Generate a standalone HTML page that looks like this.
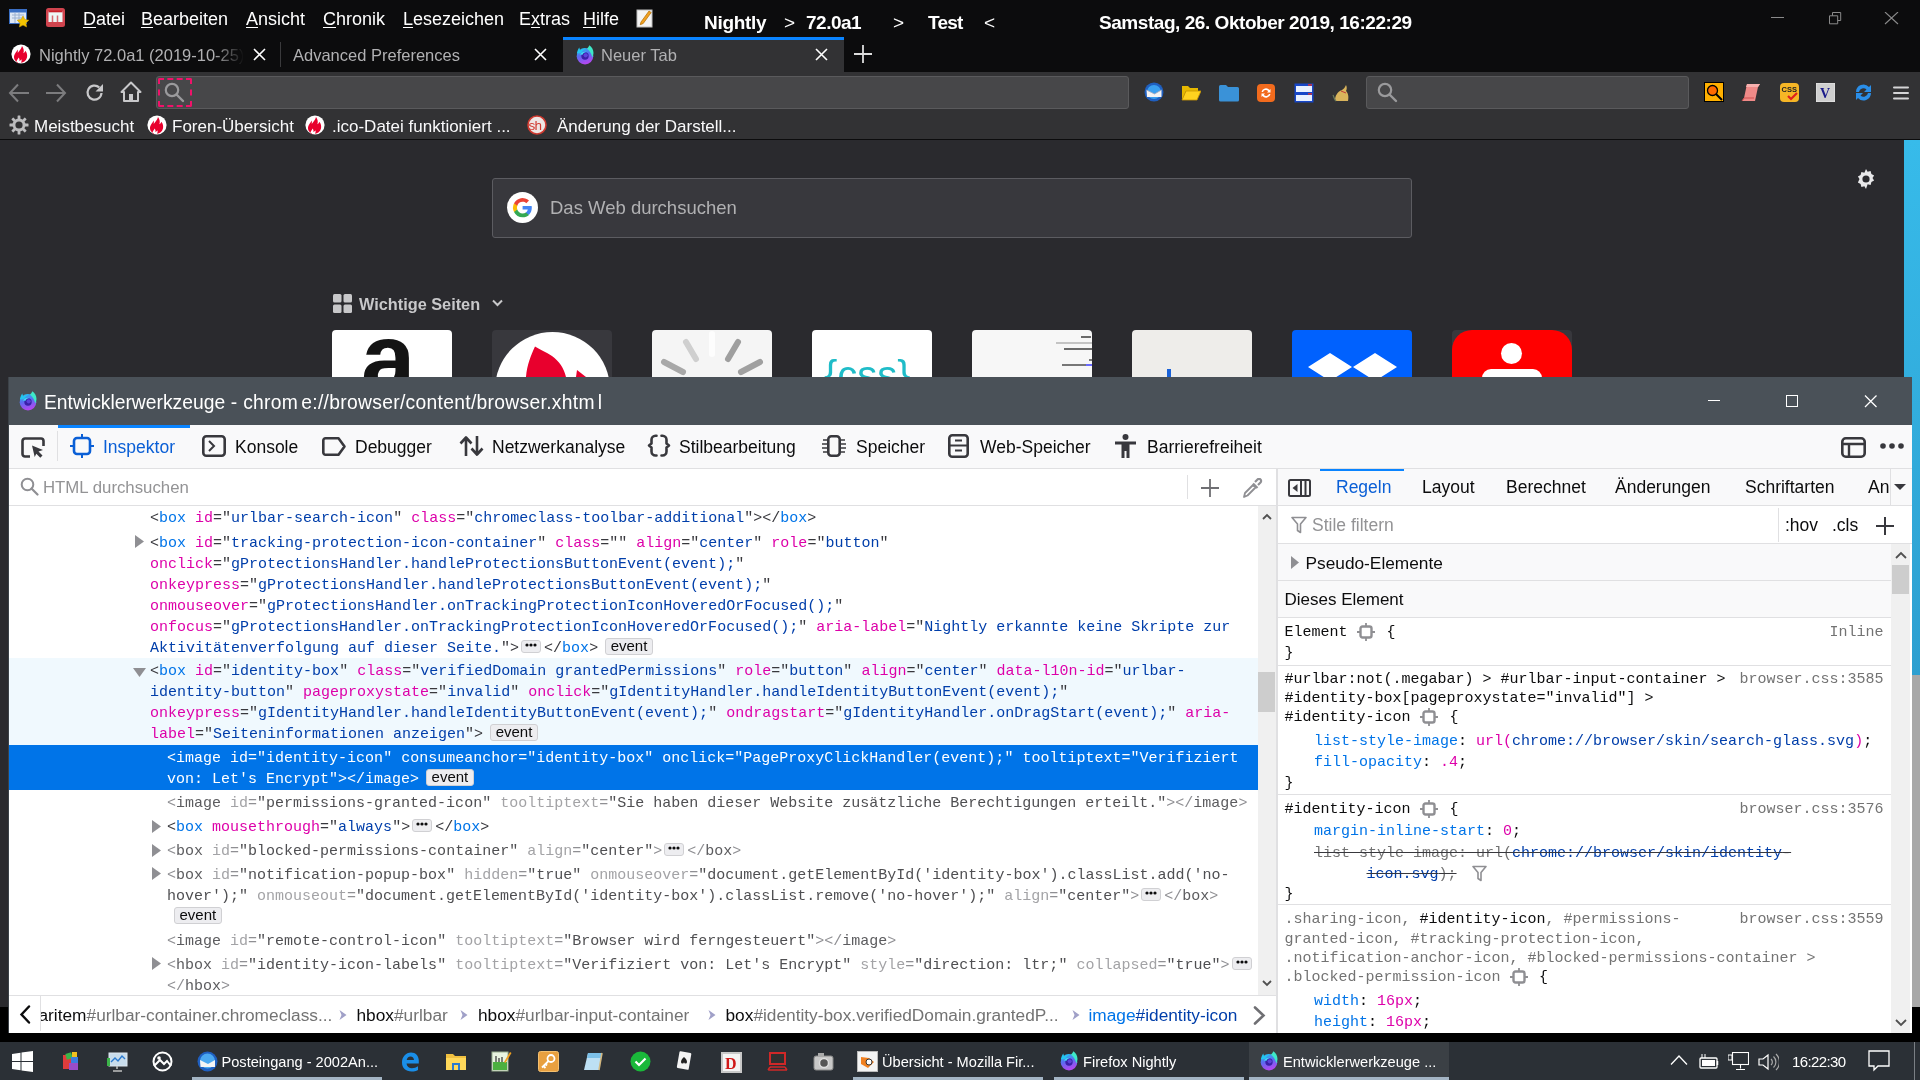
<!DOCTYPE html>
<html><head><meta charset="utf-8">
<style>
*{margin:0;padding:0;box-sizing:border-box}
html,body{width:1920px;height:1080px;overflow:hidden;background:#000;font-family:"Liberation Sans",sans-serif;position:relative}
.a{position:absolute}
.ws{white-space:pre}
/* top chrome */
#menubar{left:0;top:0;width:1920px;height:37px;background:#0c0c0d;color:#fff;font-size:18px}
#menubar .m{position:absolute;top:9px;white-space:pre}
#menubar .m u{text-decoration:underline;text-decoration-thickness:1px;text-underline-offset:2px}
#tabbar{left:0;top:37px;width:1920px;height:35px;background:#0c0c0d}
#nav{left:0;top:72px;width:1920px;height:68px;background:#323234}
#content{left:0;top:140px;width:1920px;height:867px;background:#2a2a2e}
#taskbar{left:0;top:1042px;width:1920px;height:38px;background:#2b3036}
/* devtools */
#dt{left:8px;top:377px;width:1904px;height:656px;background:#fff}
#dttitle{left:0;top:0;width:1904px;height:48px;background:#4a5158}

.ml{position:absolute;white-space:pre;font-family:"Liberation Mono",monospace;font-size:15px;line-height:21px;height:21px}
.ml .p,.ml .q{color:#38383d}.ml .t{color:#0074e8}.ml .n{color:#dd00a9}.ml .v{color:#003eaa}
.ml.sel span{color:#fff}
.ml.nd .p{color:#8f8f93}.ml.nd .t{color:#5c5c5f}.ml.nd .n{color:#a3a3a6}.ml.nd .v,.ml.nd .q{color:#4f4f52}
.tri{fill:#8f8f93}
.rl{position:absolute;white-space:pre;font-family:"Liberation Mono",monospace;font-size:15px;line-height:21px;height:21px;color:#0c0c0d}
.rl .s{color:#0c0c0d}.rl .u{color:#737373}.rl .p{color:#0c0c0d}.rl .pn{color:#0074e8}.rl .fn{color:#dd00a9}.rl .pv{color:#003eaa}.rl .og{color:#737373}
.rl .ov{text-decoration:line-through;text-decoration-color:#38383d}
.rl.src{color:#737373;text-align:right}

.ev{display:inline-block;position:relative;top:0;font-family:"Liberation Sans",sans-serif;font-size:15px;line-height:12px;height:17px;padding:0 4.5px;border:1px solid #d0d0d3;border-radius:3px;background:#ededf0;color:#0c0c0d!important;margin-left:7px;vertical-align:top;margin-top:0;box-sizing:border-box;padding-top:1px}
.dots{display:inline-block;width:20px;height:13px;border:1px solid #d0d0d3;border-radius:3px;background:#ededf0;margin:2px 3px 0 2px;vertical-align:top;text-align:center;line-height:9px;box-sizing:border-box}
.dots svg{fill:#0c0c0d;vertical-align:middle}

</style></head><body><div id="root" style="position:absolute;left:0;top:0;width:1920px;height:1080px;overflow:hidden;will-change:transform">
<div id="menubar" class="a">
  <svg class="a" style="left:9px;top:8px" width="21" height="20" viewBox="0 0 21 20"><rect x="0.5" y="1.5" width="17" height="14" fill="#dfe8f5" stroke="#3a6fc4"/><rect x="0.5" y="1.5" width="17" height="3" fill="#3a6fc4"/><path d="M3 7h12M3 10h12M6 5v10M10 5v10" stroke="#9bb0d0" stroke-width="1"/><path d="M14 8l1.8 3.6 4 .6-2.9 2.8.7 4-3.6-1.9-3.6 1.9.7-4-2.9-2.8 4-.6z" fill="#f5c400" stroke="#c99a00" stroke-width=".6"/></svg>
  <svg class="a" style="left:46px;top:8px" width="19" height="19" viewBox="0 0 19 19"><rect x="0" y="0" width="19" height="19" rx="2.5" fill="#d0444e"/><rect x="2.5" y="3" width="14" height="11" fill="#eef6f6"/><rect x="2.5" y="2.5" width="14" height="1.8" fill="#c81e28"/><path d="M6.5 7.5v6.5M11.5 7.5v6.5" stroke="#d86a72" stroke-width="1.5"/></svg>
  <div class="m" style="left:83px"><u>D</u>atei</div>
  <div class="m" style="left:141px"><u>B</u>earbeiten</div>
  <div class="m" style="left:246px"><u>A</u>nsicht</div>
  <div class="m" style="left:323px"><u>C</u>hronik</div>
  <div class="m" style="left:403px"><u>L</u>esezeichen</div>
  <div class="m" style="left:519px">E<u>x</u>tras</div>
  <div class="m" style="left:583px"><u>H</u>ilfe</div>
  <svg class="a" style="left:636px;top:8px" width="18" height="20" viewBox="0 0 18 20"><rect x="1" y="2" width="15" height="17" fill="#f4f4f4" stroke="#bdbdbd"/><path d="M5 14l8-11 2.2 1.5-8 11-3 1.2z" fill="#f0a020" stroke="#b06c00" stroke-width=".7"/></svg>
  <div class="m b" style="left:704px;top:12px;font-weight:bold;font-size:19px;letter-spacing:-0.3px">Nightly</div>
  <div class="m b" style="left:784px;top:12px;font-weight:normal;font-size:19px">&gt;</div>
  <div class="m b" style="left:806px;top:12px;font-weight:bold;font-size:19px;letter-spacing:-0.5px">72.0a1</div>
  <div class="m b" style="left:893px;top:12px;font-weight:normal;font-size:19px">&gt;</div>
  <div class="m b" style="left:928px;top:12px;font-weight:bold;font-size:19px;letter-spacing:-0.8px">Test</div>
  <div class="m b" style="left:984px;top:12px;font-weight:normal;font-size:19px">&lt;</div>
  <div class="m b" style="left:1099px;top:12px;font-weight:bold;font-size:19px;letter-spacing:-0.45px">Samstag, 26. Oktober 2019, 16:22:29</div>
  <svg class="a" style="left:1771px;top:12px" width="130" height="14" viewBox="0 0 130 14"><path d="M0 5.5h13" stroke="#8a8a8a" stroke-width="1"/><path d="M58.5 3.8h8.2v8h-8.2z M61.5 3.8V0.5h8.2v8h-3" fill="none" stroke="#8a8a8a" stroke-width="1"/><path d="M114 0l13 12M127 0l-13 12" stroke="#8a8a8a" stroke-width="1.1"/></svg>
</div>
<div id="tabbar" class="a">
  <svg class="a" style="left:11px;top:7px" width="20" height="20" viewBox="0 0 20 20"><circle cx="10" cy="10" r="9.6" fill="#fff"/><path d="M7 18.5c-3-1.2-4.6-4-3.8-7 .6-2.3 2.4-3.6 3.3-6 .5 1.5.4 2.6.2 3.6 1.4-2.5 3.8-4 4.3-7.2 1.6 2.2 2.3 4.5 1.4 7.3 1-.4 1.6-1.3 1.9-2.4 1.7 2 2.3 4.5 1.6 7-.8 2.8-3.1 4.6-6 4.9.8-1 1-2.3.3-3.4-.3 1-1 1.4-1.8 1.6.3-1.3 0-2.4-.9-3.3-.2 1.2-1 1.8-1.5 2.7-.6 1.1-.3 2.2 1 3.2z" fill="#e8002d"/></svg>
  <div class="a ws" style="left:39px;top:9px;width:205px;overflow:hidden;font-size:16.5px;color:#b1b1b3;-webkit-mask-image:linear-gradient(90deg,#000 85%,transparent)">Nightly 72.0a1 (2019-10-25)</div>
  <svg class="a" style="left:253px;top:11px" width="13" height="13" viewBox="0 0 13 13"><path d="M1 1l11 11M12 1L1 12" stroke="#fff" stroke-width="1.6"/></svg>
  <div class="a" style="left:280px;top:5px;width:1px;height:25px;background:#3a3a3c"></div>
  <div class="a ws" style="left:293px;top:9px;font-size:16.5px;color:#b1b1b3">Advanced Preferences</div>
  <svg class="a" style="left:534px;top:11px" width="13" height="13" viewBox="0 0 13 13"><path d="M1 1l11 11M12 1L1 12" stroke="#fff" stroke-width="1.6"/></svg>
  <div class="a" style="left:563px;top:0;width:281px;height:35px;background:#323234;border-top:3px solid #0a84ff"></div>
  <svg class="a" style="left:575px;top:8px" width="20" height="20" viewBox="0 0 20 20"><defs><linearGradient id="ffg1" x1="0" y1="0" x2="0.3" y2="1"><stop offset="0" stop-color="#20c8f0"/><stop offset=".5" stop-color="#5a6cf0"/><stop offset="1" stop-color="#b048f0"/></linearGradient></defs><circle cx="10" cy="11.2" r="8.3" fill="url(#ffg1)"/><path d="M12 3.4c1.2-.9 2-2 2.3-3.1 2.6 1.6 4.2 4.6 4.2 7.8-.1 1.7-.5 3.2-1.3 4.5-.4-3.6-2.4-6.5-5.2-9.2z" fill="#3ee8c8"/><path d="M1.9 8.6c.3-2.6 1.2-4.6 2.4-6.1.2 1.3.6 2.2 1.3 3C7 4.2 8.6 3.6 10.5 3.6 8.5 4.8 7.1 6.3 6.3 8z" fill="#22c6f0"/><circle cx="10" cy="11" r="3.7" fill="#3b1fa8"/><circle cx="10.7" cy="10.3" r="2.1" fill="#5d42da"/><path d="M5 9.6c1.3-2.4 3.8-3.4 6.6-2.8-1.9.4-3.3 1.3-4.1 2.9z" fill="#3fe0f4"/></svg>
  <div class="a ws" style="left:601px;top:9px;font-size:16.5px;color:#b1b1b3">Neuer Tab</div>
  <svg class="a" style="left:815px;top:11px" width="13" height="13" viewBox="0 0 13 13"><path d="M1 1l11 11M12 1L1 12" stroke="#fff" stroke-width="1.6"/></svg>
  <svg class="a" style="left:854px;top:8px" width="18" height="18" viewBox="0 0 18 18"><path d="M9 0v18M0 9h18" stroke="#ddd" stroke-width="1.8"/></svg>
</div>
<div id="nav" class="a">
  <svg class="a" style="left:8px;top:11px" width="22" height="20" viewBox="0 0 22 20"><path d="M10 1.5L2 10l8 8.5M2.5 10H21" fill="none" stroke="#7c7c7e" stroke-width="2"/></svg>
  <svg class="a" style="left:45px;top:11px" width="22" height="20" viewBox="0 0 22 20"><path d="M12 1.5L20 10l-8 8.5M19.5 10H1" fill="none" stroke="#7c7c7e" stroke-width="2"/></svg>
  <svg class="a" style="left:84px;top:10px" width="21" height="21" viewBox="0 0 21 21"><path d="M17.5 11a7 7 0 1 1-2.3-5.6" fill="none" stroke="#c8c8ca" stroke-width="2.2"/><path d="M19 2v7.5h-7.5z" fill="#c8c8ca"/></svg>
  <svg class="a" style="left:120px;top:9px" width="22" height="22" viewBox="0 0 22 22"><path d="M11 1.5L1.5 11h2.5v9h14v-9h2.5z" fill="none" stroke="#c8c8ca" stroke-width="2" stroke-linejoin="round"/><rect x="9" y="13" width="4" height="7" fill="#c8c8ca"/></svg>
  <div class="a" style="left:156px;top:4px;width:973px;height:33px;background:#474749;border:1px solid #5a5a5c;border-radius:3px"></div>
  <div class="a" style="left:158px;top:6px;width:34px;height:29px;border:2.5px dashed #f0126a;border-radius:2px"></div>
  <svg class="a" style="left:164px;top:10px" width="21" height="21" viewBox="0 0 21 21"><circle cx="8" cy="8" r="6.2" fill="none" stroke="#9a9a9c" stroke-width="2.2"/><path d="M12.5 12.5l6.5 6.5" stroke="#9a9a9c" stroke-width="2.4" stroke-linecap="round"/></svg>
  <svg class="a" style="left:1144px;top:10px" width="20" height="20" viewBox="0 0 20 20"><circle cx="10" cy="10" r="9.5" fill="#1f5fc0"/><circle cx="10" cy="10" r="7" fill="#3aa0f0"/><path d="M2.5 8l8 4 7-4v7H3z" fill="#f4f4f4"/><path d="M2.5 8l8 4 7-4" fill="none" stroke="#aab" stroke-width=".8"/></svg>
  <svg class="a" style="left:1181px;top:13px" width="20" height="16" viewBox="0 0 20 16"><path d="M1 1h6l2 2h8v3H5L1 15z" fill="#e6b800"/><path d="M5 6h15l-4 9H1z" fill="#ffd21f" stroke="#c99600" stroke-width=".8"/></svg>
  <svg class="a" style="left:1219px;top:12px" width="20" height="18" viewBox="0 0 20 18"><path d="M0 2.5a1.5 1.5 0 0 1 1.5-1.5h5.5l2 2h9.5a1.5 1.5 0 0 1 1.5 1.5v11.5a1.5 1.5 0 0 1-1.5 1.5h-17A1.5 1.5 0 0 1 0 16z" fill="#3a92d8"/></svg>
  <svg class="a" style="left:1257px;top:12px" width="18" height="18" viewBox="0 0 18 18"><rect width="18" height="18" rx="4" fill="#f26b1d"/><path d="M4.5 8a4.5 4.5 0 0 1 8-2l1-1v3.5h-3.5l1.2-1.2A3 3 0 0 0 6 8zM13.5 10a4.5 4.5 0 0 1-8 2l-1 1V9.5h3.5L6.8 10.7A3 3 0 0 0 12 10z" fill="#fff"/></svg>
  <svg class="a" style="left:1294px;top:11px" width="20" height="20" viewBox="0 0 20 20"><rect x=".5" y=".5" width="19" height="19" fill="#1646c8"/><rect x="2" y="3" width="16" height="6" fill="#e8f0ff"/><rect x="2" y="12" width="16" height="6" fill="#e8f0ff"/><rect x="14" y="1.2" width="4" height="1.4" fill="#e03030"/><rect x="14" y="10.2" width="4" height="1.4" fill="#e03030"/></svg>
  <svg class="a" style="left:1331px;top:11px" width="20" height="20" viewBox="0 0 20 20"><path d="M4 18c0-5 2-9 7-11 2-1 3-3 4-5 1 2 1 4 0 6 2 2 3 5 2 10z" fill="#d9b45c"/><path d="M2 12c1 2 1 4 3 6" stroke="#6a7a5a" stroke-width="1.2" fill="none"/><path d="M10 8l5 2" stroke="#c03a3a" stroke-width="1"/></svg>
  <div class="a" style="left:1366px;top:4px;width:323px;height:33px;background:#474749;border:1px solid #5a5a5c;border-radius:3px"></div>
  <svg class="a" style="left:1377px;top:10px" width="21" height="21" viewBox="0 0 21 21"><circle cx="8" cy="8" r="6.2" fill="none" stroke="#9a9a9c" stroke-width="2.2"/><path d="M12.5 12.5l6.5 6.5" stroke="#9a9a9c" stroke-width="2.4" stroke-linecap="round"/></svg>
  <svg class="a" style="left:1704px;top:10px" width="20" height="20" viewBox="0 0 20 20"><rect x=".5" y=".5" width="19" height="19" fill="#ffb000" stroke="#000"/><circle cx="8.5" cy="8.5" r="5" fill="#ff6a00" stroke="#000" stroke-width="1.3"/><path d="M12 12l6 6" stroke="#000" stroke-width="2"/></svg>
  <svg class="a" style="left:1741px;top:11px" width="20" height="19" viewBox="0 0 20 19"><path d="M6 1h13l-2 3-3 14H1l2-3z" fill="#f08a88"/><path d="M6 1h13l-2 3H5z" fill="#f7b0ae"/><path d="M1 18l2-3h10" fill="none" stroke="#d05050" stroke-width="1"/></svg>
  <svg class="a" style="left:1780px;top:11px" width="19" height="19" viewBox="0 0 19 19"><rect width="19" height="19" rx="4" fill="#f6b626"/><text x="1.5" y="9" font-family="Liberation Sans" font-weight="bold" font-size="7.5" fill="#222">CSS</text><path d="M8 13l3 3 6-6" stroke="#e0201c" stroke-width="2.2" fill="none"/></svg>
  <svg class="a" style="left:1816px;top:11px" width="19" height="19" viewBox="0 0 19 19"><rect width="19" height="19" fill="#cfcfcf" stroke="#e8e8e8"/><text x="4" y="15" font-family="Liberation Serif" font-weight="bold" font-size="14" fill="#1a1a8a">V</text></svg>
  <svg class="a" style="left:1853px;top:10px" width="21" height="21" viewBox="0 0 21 21"><path d="M3 10a7.5 7.5 0 0 1 13-5l2-2v7h-7l2.5-2.5A4.5 4.5 0 0 0 6 10z" fill="#2a8ee8"/><path d="M18 11a7.5 7.5 0 0 1-13 5l-2 2v-7h7l-2.5 2.5A4.5 4.5 0 0 0 15 11z" fill="#2a8ee8"/></svg>
  <svg class="a" style="left:1893px;top:13px" width="16" height="16" viewBox="0 0 16 16"><path d="M1 2.5h14M1 8h14M1 13.5h14" stroke="#d4d4d6" stroke-width="2" stroke-linecap="round"/></svg>
  <svg class="a" style="left:9px;top:43px" width="20" height="20" viewBox="0 0 20 20"><g fill="#bdbdbf"><circle cx="10" cy="10" r="6.5"/><rect x="8.6" y="0.5" width="2.8" height="19" rx=".5"/><rect x="8.6" y="0.5" width="2.8" height="19" rx=".5" transform="rotate(45 10 10)"/><rect x="8.6" y="0.5" width="2.8" height="19" rx=".5" transform="rotate(90 10 10)"/><rect x="8.6" y="0.5" width="2.8" height="19" rx=".5" transform="rotate(135 10 10)"/></g><circle cx="10" cy="10" r="3.6" fill="#323234"/></svg>
  <div class="a ws" style="left:34px;top:45px;font-size:17px;color:#f9f9fa">Meistbesucht</div>
  <svg class="a" style="left:147px;top:43px" width="20" height="20" viewBox="0 0 20 20"><circle cx="10" cy="10" r="9.6" fill="#fff"/><path d="M7 18.5c-3-1.2-4.6-4-3.8-7 .6-2.3 2.4-3.6 3.3-6 .5 1.5.4 2.6.2 3.6 1.4-2.5 3.8-4 4.3-7.2 1.6 2.2 2.3 4.5 1.4 7.3 1-.4 1.6-1.3 1.9-2.4 1.7 2 2.3 4.5 1.6 7-.8 2.8-3.1 4.6-6 4.9.8-1 1-2.3.3-3.4-.3 1-1 1.4-1.8 1.6.3-1.3 0-2.4-.9-3.3-.2 1.2-1 1.8-1.5 2.7-.6 1.1-.3 2.2 1 3.2z" fill="#e8002d"/></svg>
  <div class="a ws" style="left:172px;top:45px;font-size:17px;color:#f9f9fa">Foren-Übersicht</div>
  <svg class="a" style="left:305px;top:43px" width="20" height="20" viewBox="0 0 20 20"><circle cx="10" cy="10" r="9.6" fill="#fff"/><path d="M7 18.5c-3-1.2-4.6-4-3.8-7 .6-2.3 2.4-3.6 3.3-6 .5 1.5.4 2.6.2 3.6 1.4-2.5 3.8-4 4.3-7.2 1.6 2.2 2.3 4.5 1.4 7.3 1-.4 1.6-1.3 1.9-2.4 1.7 2 2.3 4.5 1.6 7-.8 2.8-3.1 4.6-6 4.9.8-1 1-2.3.3-3.4-.3 1-1 1.4-1.8 1.6.3-1.3 0-2.4-.9-3.3-.2 1.2-1 1.8-1.5 2.7-.6 1.1-.3 2.2 1 3.2z" fill="#e8002d"/></svg>
  <div class="a ws" style="left:332px;top:45px;font-size:17px;color:#f9f9fa">.ico-Datei funktioniert ...</div>
  <svg class="a" style="left:527px;top:43px" width="20" height="20" viewBox="0 0 20 20"><circle cx="10" cy="10" r="9" fill="#efe6e4" stroke="#d03a30" stroke-width="1.6"/><text x="1.6" y="14.8" font-family="Liberation Sans" font-size="13.5" fill="#d03a30" letter-spacing="-0.8">sh</text></svg>
  <div class="a ws" style="left:557px;top:45px;font-size:17px;color:#f9f9fa">Änderung der Darstell...</div>
  <div class="a" style="left:0;top:67px;width:1920px;height:1px;background:#0c0c0d"></div>
</div>
<div id="content" class="a">
  <div class="a" style="left:492px;top:38px;width:920px;height:60px;background:#38383d;border:1px solid #5c5c61;border-radius:3px"></div>
  <svg class="a" style="left:507px;top:52px" width="31" height="31" viewBox="0 0 31 31"><circle cx="15.5" cy="15.5" r="15.5" fill="#fff"/><g transform="translate(6 6) scale(.8)"><path d="M23.5 12.3c0-.8-.1-1.6-.2-2.3H12v4.4h6.5a5.5 5.5 0 0 1-2.4 3.6v3h3.9c2.2-2.1 3.5-5.2 3.5-8.7z" fill="#4285f4"/><path d="M12 24c3.2 0 6-1.1 8-2.9l-3.9-3c-1.1.7-2.5 1.2-4.1 1.2-3.1 0-5.8-2.1-6.7-5H1.3v3.1A12 12 0 0 0 12 24z" fill="#34a853"/><path d="M5.3 14.3a7 7 0 0 1 0-4.6V6.6H1.3a12 12 0 0 0 0 10.8z" fill="#fbbc05"/><path d="M12 4.8c1.8 0 3.3.6 4.6 1.8l3.4-3.4A12 12 0 0 0 1.3 6.6l4 3.1c.9-2.8 3.6-4.9 6.7-4.9z" fill="#ea4335"/></g></svg>
  <div class="a ws" style="left:550px;top:57px;font-size:18.5px;color:#b1b1b3">Das Web durchsuchen</div>
  <svg class="a" style="left:1855px;top:28px" width="22" height="22" viewBox="0 0 22 22"><path d="M11 1l1.6 2.7 3-.8.8 3 2.7 1.6-1.6 2.5 1.6 2.5-2.7 1.6-.8 3-3-.8L11 21l-1.6-2.7-3 .8-.8-3-2.7-1.6L4.5 11 2.9 8.5l2.7-1.6.8-3 3 .8z" fill="#e8e8ea"/><circle cx="11" cy="11" r="3.6" fill="#2a2a2e"/></svg>
  <svg class="a" style="left:333px;top:154px" width="19" height="19" viewBox="0 0 19 19"><rect x="0" y="0" width="8.5" height="8.5" rx="1.5" fill="#c8c8ca"/><rect x="10.5" y="0" width="8.5" height="8.5" rx="1.5" fill="#c8c8ca"/><rect x="0" y="10.5" width="8.5" height="8.5" rx="1.5" fill="#c8c8ca"/><rect x="10.5" y="10.5" width="8.5" height="8.5" rx="1.5" fill="#c8c8ca"/></svg>
  <div class="a ws" style="left:359px;top:155px;font-size:16.3px;font-weight:bold;color:#c8c8ca">Wichtige Seiten</div>
  <svg class="a" style="left:492px;top:159px" width="11" height="8" viewBox="0 0 11 8"><path d="M1 1.5l4.5 4.5 4.5-4.5" fill="none" stroke="#c8c8ca" stroke-width="2"/></svg>
  <div class="a" style="left:332px;top:190px;width:120px;height:60px;background:#fff;border-radius:4px 4px 0 0;overflow:hidden"><div class="a" style="left:29px;top:-21px;font-size:98px;font-weight:bold;color:#141414;line-height:1">a</div></div>
  <div class="a" style="left:492px;top:190px;width:120px;height:60px;background:#38383d;border-radius:4px 4px 0 0;overflow:hidden"><div class="a" style="left:3px;top:2px;width:115px;height:115px;border-radius:50%;background:#fff"></div><svg class="a" style="left:0;top:0" width="120" height="60" viewBox="0 0 120 60"><path d="M43 16.5C39 25 35 35 34 47H74C72 38 67 31 60 26 54 22 48 19.5 43 16.5z" fill="#e8002d"/><path d="M85 40l9 7H84z" fill="#e8002d"/></svg></div>
  <div class="a" style="left:652px;top:190px;width:120px;height:60px;background:#f5f5f5;border-radius:4px 4px 0 0;overflow:hidden"><svg class="a" style="left:0;top:0" width="120" height="60"><g stroke-linecap="round" stroke-width="6"><path d="M60 4v20" stroke="#fdfdfd"/><path d="M34 12l10 17" stroke="#cfcfcf"/><path d="M86 12l-10 17" stroke="#9f9f9f"/><path d="M12 32l19 10" stroke="#a8a8a8"/><path d="M108 32l-19 10" stroke="#a0a0a0"/></g></svg></div>
  <div class="a" style="left:812px;top:190px;width:120px;height:60px;background:#fff;border-radius:4px 4px 0 0;overflow:hidden"><div class="a ws" style="left:12px;top:23px;font-size:40px;color:#1fbcc8;letter-spacing:0px">{css}</div></div>
  <div class="a" style="left:972px;top:190px;width:120px;height:60px;background:#f7f7f7;border-radius:4px 4px 0 0;overflow:hidden"><div class="a" style="left:109px;top:5.5px;width:10px;height:2.5px;background:#6a6a6a"></div><div class="a" style="left:84px;top:12px;width:36px;height:2px;background:#c4c4c4"></div><div class="a" style="left:92px;top:18px;width:28px;height:2.2px;background:#6a6a6a"></div><div class="a" style="left:117px;top:28.8px;width:3px;height:2.2px;background:#777"></div><div class="a" style="left:90px;top:33.6px;width:24px;height:2.4px;background:#777"></div><div class="a" style="left:114px;top:33.6px;width:6px;height:2.4px;background:#6a6aff"></div></div>
  <div class="a" style="left:1132px;top:190px;width:120px;height:60px;background:#eeedea;border-radius:4px 4px 0 0;overflow:hidden"><div class="a" style="left:35px;top:39px;width:4px;height:20px;background:#1a62d8"></div></div>
  <div class="a" style="left:1292px;top:190px;width:120px;height:60px;background:#0061fe;border-radius:4px 4px 0 0;overflow:hidden"><svg class="a" style="left:0;top:0" width="120" height="60"><path d="M16 37l22-14 22 14-22 14zM61 37l22-14 22 14-22 14z" fill="#fff"/></svg></div>
  <div class="a" style="left:1452px;top:190px;width:120px;height:60px;background:#38383d;border-radius:4px 4px 0 0;overflow:hidden"><div class="a" style="left:0;top:0;width:120px;height:80px;background:#ff0000;border-radius:20px"></div><div class="a" style="left:49px;top:13px;width:21px;height:21px;border-radius:50%;background:#fff"></div><div class="a" style="left:30px;top:39px;width:60px;height:30px;border-radius:9px;background:#fff"></div></div>
  <div class="a" style="left:1904px;top:0;width:16px;height:535px;background:linear-gradient(180deg,#37bbea,#2d9fd0)"></div>
  <div class="a" style="left:1912px;top:535px;width:8px;height:332px;background:#a8a8a8"></div>
</div>
<div id="taskbar" class="a">
  <svg class="a" style="left:12px;top:9px" width="21" height="21" viewBox="0 0 21 21"><path d="M0 3l8.5-1.2V10H0zM9.5 1.6L21 0v10H9.5zM0 11h8.5v8.2L0 18zM9.5 11H21v10l-11.5-1.6z" fill="#fff"/></svg>
  <svg class="a" style="left:61px;top:9px" width="21" height="21" viewBox="0 0 21 21"><rect x="2" y="4" width="8" height="14" fill="#e03c3c"/><rect x="5" y="2" width="6" height="6" fill="#3cb44a" transform="rotate(-15 8 5)"/><rect x="10" y="6" width="7" height="7" fill="#3c7ce0"/><rect x="8" y="12" width="9" height="7" fill="#9a4cc8"/><rect x="11" y="1" width="5" height="5" fill="#f0c020"/></svg>
  <svg class="a" style="left:107px;top:10px" width="21" height="20" viewBox="0 0 21 20"><rect x="2" y="1" width="18" height="13" fill="#c8dcec" stroke="#dfe8f0"/><path d="M4 10l4-4 3 3 4-5 3 3" fill="none" stroke="#2a7ad0" stroke-width="1.4"/><path d="M10 14v3M6 19h9" stroke="#c0c0c0" stroke-width="1.5"/><rect x="0" y="6" width="3" height="8" fill="#3cb44a"/></svg>
  <svg class="a" style="left:152px;top:9px" width="21" height="21" viewBox="0 0 21 21"><circle cx="10.5" cy="10.5" r="9" fill="none" stroke="#fff" stroke-width="2"/><path d="M2 15l6-6 4 4 3-3 4 5" fill="none" stroke="#fff" stroke-width="2"/><circle cx="7" cy="7" r="1.8" fill="#fff"/></svg>
  <svg class="a" style="left:197px;top:9px" width="21" height="21" viewBox="0 0 21 21"><circle cx="10.5" cy="10.5" r="10" fill="#1f5fc0"/><circle cx="10.5" cy="10" r="7.5" fill="#4aa8f0"/><path d="M3 9l8 4 7-4v7H3.5z" fill="#f4f4f4"/></svg>
  <div class="a ws" style="left:221.5px;top:11px;font-size:14.6px;color:#fff;margin-top:1px">Posteingang - 2002An...</div>
  <div class="a" style="left:192px;top:35px;width:190px;height:3px;background:#a3b4c4"></div>
  <svg class="a" style="left:400px;top:10px" width="20" height="20" viewBox="0 0 20 20"><path d="M18.5 11.5H6.5c.3 3 2.6 4.8 5.5 4.8 2.2 0 4.2-.8 6-2v3.6c-1.9 1.1-4 1.6-6.3 1.6C5.6 19.5 2 15.8 2 10.5 2 5 5.8.5 11 .5c4.7 0 7.8 3.3 7.8 8.3v2.7zM6.7 8h7.3c0-2-1.4-3.6-3.5-3.6S7 6 6.7 8z" fill="#1a8ee8"/></svg>
  <svg class="a" style="left:446px;top:10px" width="20" height="19" viewBox="0 0 20 19"><path d="M0 2h7l2 2h11v14H0z" fill="#f0c040"/><path d="M0 6h20v12H0z" fill="#ffd85a"/><path d="M6 11h8v7H6z" fill="#2a7ad0"/><path d="M8 13h4v5H8z" fill="#ffd85a"/></svg>
  <svg class="a" style="left:491px;top:8px" width="21" height="22" viewBox="0 0 21 22"><rect x="1" y="2" width="16" height="19" fill="#e8f4e0" stroke="#9ab090"/><rect x="2" y="12" width="14" height="8" fill="#4cb040"/><path d="M5 6v6M8 8v4M11 7v5" stroke="#333" stroke-width="1.2"/><path d="M13 12l6-10 1.5 1-6 10z" fill="#f0a020"/></svg>
  <svg class="a" style="left:538px;top:9px" width="21" height="21" viewBox="0 0 21 21"><rect x=".5" y=".5" width="20" height="20" rx="2" fill="#e8a040" stroke="#f4c070"/><circle cx="13" cy="7.5" r="3.5" fill="none" stroke="#fff" stroke-width="1.8"/><path d="M10.5 10L4 16.5M5.5 15l2 2M7.5 13l1.5 1.5" stroke="#fff" stroke-width="1.8"/></svg>
  <svg class="a" style="left:583px;top:9px" width="21" height="21" viewBox="0 0 21 21"><path d="M5 2h14l-3 17H1z" fill="#bde0f4"/><path d="M5 2h14l-1 5H4z" fill="#7cc0e8"/><path d="M19 2l-3 17" stroke="#d4b880" stroke-width="1.5"/></svg>
  <svg class="a" style="left:630px;top:9px" width="21" height="21" viewBox="0 0 21 21"><circle cx="10.5" cy="10.5" r="10" fill="#1ab83a"/><path d="M5.5 10.5l3.5 3.5 6.5-6.5" fill="none" stroke="#fff" stroke-width="2.2"/></svg>
  <svg class="a" style="left:675px;top:9px" width="18" height="21" viewBox="0 0 18 21"><rect x="3" y="1" width="12" height="17" rx="1" fill="#f4f4f4" transform="rotate(10 9 10)"/><path d="M9 6c2 2 3 3 3 5a1.5 1.5 0 0 1-3 0 1.5 1.5 0 0 1-3 0c0-2 1-3 3-5z" fill="#222"/></svg>
  <svg class="a" style="left:721px;top:10px" width="21" height="21" viewBox="0 0 21 21"><rect width="21" height="21" fill="#c8c8c8"/><rect x="2" y="2" width="17" height="17" fill="#f4f4f4"/><text x="4" y="17" font-family="Liberation Serif" font-weight="bold" font-size="16" fill="#d01818">D</text></svg>
  <svg class="a" style="left:767px;top:9px" width="21" height="21" viewBox="0 0 21 21"><rect x="2" y="1" width="17" height="13" fill="#d02828"/><rect x="4" y="3" width="13" height="9" fill="#303030"/><path d="M1 19h19M3 16l-2 3M18 16l2 3M3 16h15" stroke="#d02828" stroke-width="1.5"/></svg>
  <svg class="a" style="left:813px;top:10px" width="21" height="19" viewBox="0 0 21 19"><rect x="1" y="4" width="19" height="14" rx="2" fill="#c8c8c8" stroke="#888"/><rect x="5" y="1" width="6" height="4" fill="#aaa"/><circle cx="11" cy="11" r="4.5" fill="#555" stroke="#ddd" stroke-width="1.5"/></svg>
  <svg class="a" style="left:857px;top:9px" width="21" height="21" viewBox="0 0 21 21"><rect x=".5" y=".5" width="20" height="20" fill="#f4f4f4" stroke="#bbb"/><path d="M4 6l8 1 5 4-6 6-7-4z" fill="#f08020"/><circle cx="12" cy="11" r="3" fill="#fff" stroke="#333"/></svg>
  <div class="a ws" style="left:882px;top:11px;font-size:14.6px;color:#fff;margin-top:1px">Übersicht - Mozilla Fir...</div>
  <div class="a" style="left:853px;top:35px;width:190px;height:3px;background:#a3b4c4"></div>
  <svg class="a" style="left:1059px;top:9px" width="20" height="20" viewBox="0 0 20 20"><circle cx="10" cy="11.2" r="8.3" fill="url(#ffgT)"/><path d="M12 3.4c1.2-.9 2-2 2.3-3.1 2.6 1.6 4.2 4.6 4.2 7.8-.1 1.7-.5 3.2-1.3 4.5-.4-3.6-2.4-6.5-5.2-9.2z" fill="#3ee8c8"/><path d="M1.9 8.6c.3-2.6 1.2-4.6 2.4-6.1.2 1.3.6 2.2 1.3 3C7 4.2 8.6 3.6 10.5 3.6 8.5 4.8 7.1 6.3 6.3 8z" fill="#22c6f0"/><circle cx="10" cy="11" r="3.7" fill="#3b1fa8"/><circle cx="10.7" cy="10.3" r="2.1" fill="#5d42da"/><path d="M5 9.6c1.3-2.4 3.8-3.4 6.6-2.8-1.9.4-3.3 1.3-4.1 2.9z" fill="#3fe0f4"/></svg>
  <div class="a ws" style="left:1083px;top:11px;font-size:14.6px;color:#fff;margin-top:1px">Firefox Nightly</div>
  <div class="a" style="left:1054px;top:35px;width:190px;height:3px;background:#a3b4c4"></div>
  <div class="a" style="left:1249px;top:0;width:200px;height:38px;background:#3b4045"></div>
  <svg class="a" style="left:1259px;top:9px" width="20" height="20" viewBox="0 0 20 20"><circle cx="10" cy="11.2" r="8.3" fill="url(#ffgT)"/><path d="M12 3.4c1.2-.9 2-2 2.3-3.1 2.6 1.6 4.2 4.6 4.2 7.8-.1 1.7-.5 3.2-1.3 4.5-.4-3.6-2.4-6.5-5.2-9.2z" fill="#3ee8c8"/><path d="M1.9 8.6c.3-2.6 1.2-4.6 2.4-6.1.2 1.3.6 2.2 1.3 3C7 4.2 8.6 3.6 10.5 3.6 8.5 4.8 7.1 6.3 6.3 8z" fill="#22c6f0"/><circle cx="10" cy="11" r="3.7" fill="#3b1fa8"/><circle cx="10.7" cy="10.3" r="2.1" fill="#5d42da"/><path d="M5 9.6c1.3-2.4 3.8-3.4 6.6-2.8-1.9.4-3.3 1.3-4.1 2.9z" fill="#3fe0f4"/></svg>
  <div class="a ws" style="left:1283px;top:11px;font-size:14.6px;color:#fff;margin-top:1px">Entwicklerwerkzeuge ...</div>
  <div class="a" style="left:1249px;top:35px;width:200px;height:3px;background:#a3b4c4"></div>
  <svg class="a" style="left:1670px;top:12px" width="18" height="12" viewBox="0 0 18 12"><path d="M1 10.5L9 2l8 8.5" fill="none" stroke="#fff" stroke-width="1.3"/></svg>
  <svg class="a" style="left:1698px;top:12px" width="21" height="16" viewBox="0 0 21 16"><rect x="2" y="4" width="17" height="10" rx="1" fill="none" stroke="#fff" stroke-width="1.3"/><rect x="4" y="6" width="13" height="6" fill="#fff"/><path d="M19.5 7v4" stroke="#fff" stroke-width="1.5"/><path d="M4 0v4M7 0v4" stroke="#fff" stroke-width="1"/></svg>
  <svg class="a" style="left:1728px;top:10px" width="21" height="19" viewBox="0 0 21 19"><rect x="4.5" y=".5" width="16" height="12" fill="none" stroke="#fff" stroke-width="1.1"/><path d="M12.5 12.5v4M8 17.5h9" stroke="#fff" stroke-width="1.1"/><rect x="0" y="3" width="4" height="5" fill="none" stroke="#fff"/></svg>
  <svg class="a" style="left:1758px;top:10px" width="21" height="20" viewBox="0 0 21 20"><path d="M1 7h4l5-4v14l-5-4H1z" fill="none" stroke="#fff" stroke-width="1.2"/><path d="M13 7a4 4 0 0 1 0 6M15.5 4.5a7.5 7.5 0 0 1 0 11M18 2a11 11 0 0 1 0 16" fill="none" stroke="#aaa" stroke-width="1.2"/></svg>
  <div class="a ws" style="left:1792px;top:11px;font-size:15px;letter-spacing:-0.6px;color:#fff">16:22:30</div>
  <svg class="a" style="left:1868px;top:8px" width="22" height="22" viewBox="0 0 22 22"><path d="M1 1h20v15H10l-4 4v-4H1z" fill="none" stroke="#fff" stroke-width="1.3"/></svg>
  <div class="a" style="left:1914px;top:0;width:1px;height:38px;background:#7a7f84"></div>
</div>
<div id="dt" class="a">
  <div id="dttitle" class="a"></div>
  <div class="a" style="left:0;top:0;width:1px;height:656px;background:#3c4248"></div>
  <svg class="a" style="left:10px;top:14px" width="20" height="20" viewBox="0 0 20 20"><defs><linearGradient id="ffgT" x1="0" y1="0" x2="0.3" y2="1"><stop offset="0" stop-color="#20c8f0"/><stop offset=".5" stop-color="#5a6cf0"/><stop offset="1" stop-color="#b048f0"/></linearGradient></defs><circle cx="10" cy="11.2" r="8.3" fill="url(#ffgT)"/><path d="M12 3.4c1.2-.9 2-2 2.3-3.1 2.6 1.6 4.2 4.6 4.2 7.8-.1 1.7-.5 3.2-1.3 4.5-.4-3.6-2.4-6.5-5.2-9.2z" fill="#3ee8c8"/><path d="M1.9 8.6c.3-2.6 1.2-4.6 2.4-6.1.2 1.3.6 2.2 1.3 3C7 4.2 8.6 3.6 10.5 3.6 8.5 4.8 7.1 6.3 6.3 8z" fill="#22c6f0"/><circle cx="10" cy="11" r="3.7" fill="#3b1fa8"/><circle cx="10.7" cy="10.3" r="2.1" fill="#5d42da"/><path d="M5 9.6c1.3-2.4 3.8-3.4 6.6-2.8-1.9.4-3.3 1.3-4.1 2.9z" fill="#3fe0f4"/></svg>
  <div class="a ws" style="left:36px;top:15px;font-size:19.3px;color:#fff">Entwicklerwerkzeuge<span style="letter-spacing:0.3px"> - chrom<span style="margin-left:3px">e</span>://browser/content/browser.xhtm<span style="margin-left:3px">l</span></span></div>
  <svg class="a" style="left:1698px;top:17px" width="180" height="15" viewBox="0 0 180 15"><path d="M2 6.5h12" stroke="#fff" stroke-width="1"/><rect x="80.5" y="1.5" width="11" height="11" fill="none" stroke="#fff" stroke-width="1"/><path d="M159 1.5l11.5 11.5M170.5 1.5L159 13" stroke="#fff" stroke-width="1.3"/></svg>
  <div class="a" style="left:1px;top:48px;width:1903px;height:44px;background:#f9f9fa;border-bottom:1px solid #e0e0e2"></div>
  <div class="a" style="left:50px;top:48px;width:132px;height:3px;background:#0a84ff"></div>
  <svg class="a" style="left:13px;top:60px" width="25" height="21" viewBox="0 0 25 21"><path d="M9 19.5H4a2.5 2.5 0 0 1-2.5-2.5V4A2.5 2.5 0 0 1 4 1.5h16A2.5 2.5 0 0 1 22.5 4v5" fill="none" stroke="#38383d" stroke-width="2.6"/><path d="M11 8.5l11 4.5-4.5 1.6 4 4-2.2 2.2-4-4L13.7 20z" fill="#38383d"/></svg>
  <div class="a" style="left:49px;top:54px;width:1px;height:30px;background:#e0e0e2"></div>
  <svg class="a" style="left:62px;top:57px" width="24" height="24" viewBox="0 0 24 24"><rect x="4" y="4" width="16" height="16" rx="3" fill="none" stroke="#0a5fd6" stroke-width="2.6"/><path d="M12 0v4M12 20v4M0 12h4M20 12h4" stroke="#0a5fd6" stroke-width="2"/></svg>
  <div class="a ws" style="left:95px;top:60px;font-size:17.5px;color:#0a5fd6">Inspektor</div>
  <svg class="a" style="left:194px;top:58px" width="24" height="22" viewBox="0 0 24 22"><rect x="1.3" y="1.3" width="21.4" height="19.4" rx="3" fill="none" stroke="#38383d" stroke-width="2.6"/><path d="M7 6l5 5-5 5" fill="none" stroke="#38383d" stroke-width="2"/></svg>
  <div class="a ws" style="left:227px;top:60px;font-size:17.5px;color:#0c0c0d">Konsole</div>
  <svg class="a" style="left:314px;top:60px" width="25" height="19" viewBox="0 0 25 19"><path d="M3.5 1.3h13l6 8.2-6 8.2h-13A2.2 2.2 0 0 1 1.3 15.5v-12A2.2 2.2 0 0 1 3.5 1.3z" fill="none" stroke="#38383d" stroke-width="2.6" stroke-linejoin="round"/></svg>
  <div class="a ws" style="left:347px;top:60px;font-size:17.5px;color:#0c0c0d">Debugger</div>
  <svg class="a" style="left:451px;top:58px" width="25" height="22" viewBox="0 0 25 22"><path d="M7 21V3M1.5 8.5L7 2.5l5.5 6M18 1v18M12.5 13.5L18 19.5l5.5-6" fill="none" stroke="#38383d" stroke-width="2.6" stroke-linejoin="round"/></svg>
  <div class="a ws" style="left:484px;top:60px;font-size:17.5px;color:#0c0c0d">Netzwerkanalyse</div>
  <svg class="a" style="left:638px;top:56px" width="26" height="25" viewBox="0 0 26 25"><path d="M10.5 2.8H9.5a4 4 0 0 0-4 4V10.5L3 12.5l2.5 2V18.5a4 4 0 0 0 4 4h1M15.5 2.8h1a4 4 0 0 1 4 4V10.5L23 12.5l-2.5 2V18.5a4 4 0 0 1-4 4h-1" fill="none" stroke="#38383d" stroke-width="2.6" stroke-linecap="round" stroke-linejoin="round"/></svg>
  <div class="a ws" style="left:671px;top:60px;font-size:17.5px;color:#0c0c0d">Stilbearbeitung</div>
  <svg class="a" style="left:814px;top:58px" width="24" height="22" viewBox="0 0 24 22"><rect x="6.3" y="1.3" width="11.4" height="19.4" rx="3" fill="none" stroke="#38383d" stroke-width="2.6"/><path d="M1 5h4M0 9h5M0 13h5M1 17h4M19 5h4M19 9h5M19 13h5M19 17h4" stroke="#38383d" stroke-width="1.4"/></svg>
  <div class="a ws" style="left:848px;top:60px;font-size:17.5px;color:#0c0c0d">Speicher</div>
  <svg class="a" style="left:940px;top:57px" width="21" height="24" viewBox="0 0 21 24"><rect x="1.3" y="1.3" width="18.4" height="21.4" rx="3" fill="none" stroke="#38383d" stroke-width="2.6"/><path d="M1 11.5h19M7 6.5h7M7 16.5h7" stroke="#38383d" stroke-width="2"/></svg>
  <div class="a ws" style="left:972px;top:60px;font-size:17.5px;color:#0c0c0d">Web-Speicher</div>
  <svg class="a" style="left:1107px;top:57px" width="21" height="24" viewBox="0 0 21 24"><circle cx="10.5" cy="3" r="3" fill="#38383d"/><path d="M0 7.5h21v3h-6.5V24h-3v-7h-2v7h-3V10.5H0z" fill="#38383d"/></svg>
  <div class="a ws" style="left:1139px;top:60px;font-size:17.5px;color:#0c0c0d">Barrierefreiheit</div>
  <svg class="a" style="left:1833px;top:60px" width="25" height="21" viewBox="0 0 25 21"><rect x="1.3" y="1.3" width="22.4" height="18.4" rx="3.5" fill="none" stroke="#38383d" stroke-width="2.6"/><path d="M1 7h23M8 7v13" stroke="#38383d" stroke-width="2.4"/></svg>
  <svg class="a" style="left:1872px;top:66px" width="24" height="6" viewBox="0 0 24 6"><circle cx="3" cy="3" r="2.8" fill="#38383d"/><circle cx="12" cy="3" r="2.8" fill="#38383d"/><circle cx="21" cy="3" r="2.8" fill="#38383d"/></svg>

  <!-- markup panel -->
  <div class="a" style="left:1px;top:281px;width:1249px;height:86.5px;background:#f0f9fe"></div>
  <div class="a" style="left:1px;top:367.5px;width:1249px;height:45px;background:#0074e8"></div>
  <div class="a" style="left:1250px;top:129px;width:18px;height:489px;background:#f0f0f0"></div>
  <svg class="a" style="left:1254px;top:136px" width="10" height="7" viewBox="0 0 10 7"><path d="M1 6l4-4 4 4" fill="none" stroke="#505050" stroke-width="1.8"/></svg>
  <div class="a" style="left:1250px;top:295px;width:17px;height:40px;background:#cdcdcd"></div>
  <svg class="a" style="left:1254px;top:603px" width="10" height="7" viewBox="0 0 10 7"><path d="M1 1l4 4 4-4" fill="none" stroke="#505050" stroke-width="1.8"/></svg>
<div class="ml " style="left:142px;top:131.4px"><span class="p">&lt;</span><span class="t">box</span><span class="p"> </span><span class="n">id</span><span class="p">=</span><span class="q">"</span><span class="v">urlbar-search-icon</span><span class="q">"</span><span class="p"> </span><span class="n">class</span><span class="p">=</span><span class="q">"</span><span class="v">chromeclass-toolbar-additional</span><span class="q">"</span><span class="p">&gt;&lt;/</span><span class="t">box</span><span class="p">&gt;</span></div>
<div class="ml " style="left:142px;top:155.5px"><span class="p">&lt;</span><span class="t">box</span><span class="p"> </span><span class="n">id</span><span class="p">=</span><span class="q">"</span><span class="v">tracking-protection-icon-container</span><span class="q">"</span><span class="p"> </span><span class="n">class</span><span class="p">=</span><span class="q">"</span><span class="q">"</span><span class="p"> </span><span class="n">align</span><span class="p">=</span><span class="q">"</span><span class="v">center</span><span class="q">"</span><span class="p"> </span><span class="n">role</span><span class="p">=</span><span class="q">"</span><span class="v">button</span><span class="q">"</span></div>
<div class="ml " style="left:142px;top:176.5px"><span class="n">onclick</span><span class="p">=</span><span class="q">"</span><span class="v">gProtectionsHandler.handleProtectionsButtonEvent(event);</span><span class="q">"</span></div>
<div class="ml " style="left:142px;top:197.5px"><span class="n">onkeypress</span><span class="p">=</span><span class="q">"</span><span class="v">gProtectionsHandler.handleProtectionsButtonEvent(event);</span><span class="q">"</span></div>
<div class="ml " style="left:142px;top:218.5px"><span class="n">onmouseover</span><span class="p">=</span><span class="q">"</span><span class="v">gProtectionsHandler.onTrackingProtectionIconHoveredOrFocused();</span><span class="q">"</span></div>
<div class="ml " style="left:142px;top:239.5px"><span class="n">onfocus</span><span class="p">=</span><span class="q">"</span><span class="v">gProtectionsHandler.onTrackingProtectionIconHoveredOrFocused();</span><span class="q">"</span><span class="p"> </span><span class="n">aria-label</span><span class="p">=</span><span class="q">"</span><span class="v">Nightly erkannte keine Skripte zur</span></div>
<div class="ml " style="left:142px;top:260.5px"><span class="v">Aktivitätenverfolgung auf dieser Seite.</span><span class="q">"</span><span class="p">&gt;</span><span class="dots"><svg width="12" height="4" viewBox="0 0 12 4"><circle cx="2" cy="2" r="1.6"/><circle cx="6" cy="2" r="1.6"/><circle cx="10" cy="2" r="1.6"/></svg></span><span class="p">&lt;/</span><span class="t">box</span><span class="p">&gt;</span><span class="ev">event</span></div>
<svg class="a tri " style="left:127px;top:158px" width="9" height="13" viewBox="0 0 9 13"><path d="M0 0l9 6.5L0 13z"/></svg>
<div class="ml hov" style="left:142px;top:284.0px"><span class="p">&lt;</span><span class="t">box</span><span class="p"> </span><span class="n">id</span><span class="p">=</span><span class="q">"</span><span class="v">identity-box</span><span class="q">"</span><span class="p"> </span><span class="n">class</span><span class="p">=</span><span class="q">"</span><span class="v">verifiedDomain grantedPermissions</span><span class="q">"</span><span class="p"> </span><span class="n">role</span><span class="p">=</span><span class="q">"</span><span class="v">button</span><span class="q">"</span><span class="p"> </span><span class="n">align</span><span class="p">=</span><span class="q">"</span><span class="v">center</span><span class="q">"</span><span class="p"> </span><span class="n">data-l10n-id</span><span class="p">=</span><span class="q">"</span><span class="v">urlbar-</span></div>
<div class="ml hov" style="left:142px;top:305.0px"><span class="v">identity-button</span><span class="q">"</span><span class="p"> </span><span class="n">pageproxystate</span><span class="p">=</span><span class="q">"</span><span class="v">invalid</span><span class="q">"</span><span class="p"> </span><span class="n">onclick</span><span class="p">=</span><span class="q">"</span><span class="v">gIdentityHandler.handleIdentityButtonEvent(event);</span><span class="q">"</span></div>
<div class="ml hov" style="left:142px;top:326.0px"><span class="n">onkeypress</span><span class="p">=</span><span class="q">"</span><span class="v">gIdentityHandler.handleIdentityButtonEvent(event);</span><span class="q">"</span><span class="p"> </span><span class="n">ondragstart</span><span class="p">=</span><span class="q">"</span><span class="v">gIdentityHandler.onDragStart(event);</span><span class="q">"</span><span class="p"> </span><span class="n">aria-</span></div>
<div class="ml hov" style="left:142px;top:347.3px"><span class="n">label</span><span class="p">=</span><span class="q">"</span><span class="v">Seiteninformationen anzeigen</span><span class="q">"</span><span class="p">&gt;</span><span class="ev">event</span></div>
<svg class="a tri hov" style="left:125px;top:290.5px" width="13" height="9" viewBox="0 0 13 9"><path d="M0 0h13L6.5 9z"/></svg>
<div class="ml sel" style="left:159px;top:371.3px"><span class="p">&lt;</span><span class="t">image</span><span class="p"> </span><span class="n">id</span><span class="p">=</span><span class="q">"</span><span class="v">identity-icon</span><span class="q">"</span><span class="p"> </span><span class="n">consumeanchor</span><span class="p">=</span><span class="q">"</span><span class="v">identity-box</span><span class="q">"</span><span class="p"> </span><span class="n">onclick</span><span class="p">=</span><span class="q">"</span><span class="v">PageProxyClickHandler(event);</span><span class="q">"</span><span class="p"> </span><span class="n">tooltiptext</span><span class="p">=</span><span class="q">"</span><span class="v">Verifiziert</span></div>
<div class="ml sel" style="left:159px;top:392.4px"><span class="v">von: Let's Encrypt</span><span class="q">"</span><span class="p">&gt;&lt;/</span><span class="t">image</span><span class="p">&gt;</span><span class="ev">event</span></div>
<div class="ml nd" style="left:159px;top:416.0px"><span class="p">&lt;</span><span class="t">image</span><span class="p"> </span><span class="n">id</span><span class="p">=</span><span class="q">"</span><span class="v">permissions-granted-icon</span><span class="q">"</span><span class="p"> </span><span class="n">tooltiptext</span><span class="p">=</span><span class="q">"</span><span class="v">Sie haben dieser Website zusätzliche Berechtigungen erteilt.</span><span class="q">"</span><span class="p">&gt;&lt;/</span><span class="t">image</span><span class="p">&gt;</span></div>
<div class="ml " style="left:159px;top:440.0px"><span class="p">&lt;</span><span class="t">box</span><span class="p"> </span><span class="n">mousethrough</span><span class="p">=</span><span class="q">"</span><span class="v">always</span><span class="q">"</span><span class="p">&gt;</span><span class="dots"><svg width="12" height="4" viewBox="0 0 12 4"><circle cx="2" cy="2" r="1.6"/><circle cx="6" cy="2" r="1.6"/><circle cx="10" cy="2" r="1.6"/></svg></span><span class="p">&lt;/</span><span class="t">box</span><span class="p">&gt;</span></div>
<svg class="a tri " style="left:144px;top:442.5px" width="9" height="13" viewBox="0 0 9 13"><path d="M0 0l9 6.5L0 13z"/></svg>
<div class="ml nd" style="left:159px;top:464.0px"><span class="p">&lt;</span><span class="t">box</span><span class="p"> </span><span class="n">id</span><span class="p">=</span><span class="q">"</span><span class="v">blocked-permissions-container</span><span class="q">"</span><span class="p"> </span><span class="n">align</span><span class="p">=</span><span class="q">"</span><span class="v">center</span><span class="q">"</span><span class="p">&gt;</span><span class="dots"><svg width="12" height="4" viewBox="0 0 12 4"><circle cx="2" cy="2" r="1.6"/><circle cx="6" cy="2" r="1.6"/><circle cx="10" cy="2" r="1.6"/></svg></span><span class="p">&lt;/</span><span class="t">box</span><span class="p">&gt;</span></div>
<svg class="a tri nd" style="left:144px;top:466.5px" width="9" height="13" viewBox="0 0 9 13"><path d="M0 0l9 6.5L0 13z"/></svg>
<div class="ml nd" style="left:159px;top:487.8px"><span class="p">&lt;</span><span class="t">box</span><span class="p"> </span><span class="n">id</span><span class="p">=</span><span class="q">"</span><span class="v">notification-popup-box</span><span class="q">"</span><span class="p"> </span><span class="n">hidden</span><span class="p">=</span><span class="q">"</span><span class="v">true</span><span class="q">"</span><span class="p"> </span><span class="n">onmouseover</span><span class="p">=</span><span class="q">"</span><span class="v">document.getElementById('identity-box').classList.add('no-</span></div>
<div class="ml nd" style="left:159px;top:509.2px"><span class="v">hover');</span><span class="q">"</span><span class="p"> </span><span class="n">onmouseout</span><span class="p">=</span><span class="q">"</span><span class="v">document.getElementById('identity-box').classList.remove('no-hover');</span><span class="q">"</span><span class="p"> </span><span class="n">align</span><span class="p">=</span><span class="q">"</span><span class="v">center</span><span class="q">"</span><span class="p">&gt;</span><span class="dots"><svg width="12" height="4" viewBox="0 0 12 4"><circle cx="2" cy="2" r="1.6"/><circle cx="6" cy="2" r="1.6"/><circle cx="10" cy="2" r="1.6"/></svg></span><span class="p">&lt;/</span><span class="t">box</span><span class="p">&gt;</span></div>
<div class="ml nd" style="left:159px;top:530.2px"><span class="ev">event</span></div>
<svg class="a tri nd" style="left:144px;top:490.3px" width="9" height="13" viewBox="0 0 9 13"><path d="M0 0l9 6.5L0 13z"/></svg>
<div class="ml nd" style="left:159px;top:553.5px"><span class="p">&lt;</span><span class="t">image</span><span class="p"> </span><span class="n">id</span><span class="p">=</span><span class="q">"</span><span class="v">remote-control-icon</span><span class="q">"</span><span class="p"> </span><span class="n">tooltiptext</span><span class="p">=</span><span class="q">"</span><span class="v">Browser wird ferngesteuert</span><span class="q">"</span><span class="p">&gt;&lt;/</span><span class="t">image</span><span class="p">&gt;</span></div>
<div class="ml nd" style="left:159px;top:577.5px"><span class="p">&lt;</span><span class="t">hbox</span><span class="p"> </span><span class="n">id</span><span class="p">=</span><span class="q">"</span><span class="v">identity-icon-labels</span><span class="q">"</span><span class="p"> </span><span class="n">tooltiptext</span><span class="p">=</span><span class="q">"</span><span class="v">Verifiziert von: Let's Encrypt</span><span class="q">"</span><span class="p"> </span><span class="n">style</span><span class="p">=</span><span class="q">"</span><span class="v">direction: ltr;</span><span class="q">"</span><span class="p"> </span><span class="n">collapsed</span><span class="p">=</span><span class="q">"</span><span class="v">true</span><span class="q">"</span><span class="p">&gt;</span><span class="dots"><svg width="12" height="4" viewBox="0 0 12 4"><circle cx="2" cy="2" r="1.6"/><circle cx="6" cy="2" r="1.6"/><circle cx="10" cy="2" r="1.6"/></svg></span></div>
<div class="ml nd" style="left:159px;top:598.5px"><span class="p">&lt;/</span><span class="t">hbox</span><span class="p">&gt;</span></div>
<svg class="a tri nd" style="left:144px;top:580px" width="9" height="13" viewBox="0 0 9 13"><path d="M0 0l9 6.5L0 13z"/></svg>

  <!-- breadcrumbs -->
  <div class="a" style="left:1px;top:618px;width:1267px;height:38px;background:#fff;border-top:1px solid #e0e0e2"></div>
<svg class="a" style="left:10.5px;top:627.5px" width="12" height="19" viewBox="0 0 12 19"><path d="M10 1.5L2.5 9.5l7.5 8" fill="none" stroke="#0c0c0d" stroke-width="2.4" stroke-linecap="round"/></svg>
<div class="a" style="left:32px;top:619px;width:1px;height:35px;background:#e0e0e2"></div>
<div class="a" style="left:33px;top:619px;width:1209px;height:36px;overflow:hidden">
<div class="a ws" style="left:-2.5px;top:9px;font-size:17.3px;color:#0c0c0d">aritem<span style="color:#737373">#urlbar-container.chromeclass...</span></div>
<svg class="a" style="left:297.5px;top:14px" width="8" height="10" viewBox="0 0 8 10"><path d="M0.5 0l7 5-7 5 2-5z" fill="#a0a0c8"/></svg>
<div class="a ws" style="left:315.5px;top:9px;font-size:17.3px;color:#0c0c0d">hbox<span style="color:#737373">#urlbar</span></div>
<svg class="a" style="left:418.5px;top:14px" width="8" height="10" viewBox="0 0 8 10"><path d="M0.5 0l7 5-7 5 2-5z" fill="#a0a0c8"/></svg>
<div class="a ws" style="left:437px;top:9px;font-size:17.3px;color:#0c0c0d">hbox<span style="color:#737373">#urlbar-input-container</span></div>
<svg class="a" style="left:666.5px;top:14px" width="8" height="10" viewBox="0 0 8 10"><path d="M0.5 0l7 5-7 5 2-5z" fill="#a0a0c8"/></svg>
<div class="a ws" style="left:684.5px;top:9px;font-size:17.3px;color:#0c0c0d">box<span style="color:#737373">#identity-box.verifiedDomain.grantedP...</span></div>
<svg class="a" style="left:1030.5px;top:14px" width="8" height="10" viewBox="0 0 8 10"><path d="M0.5 0l7 5-7 5 2-5z" fill="#a0a0c8"/></svg>
<div class="a ws" style="left:1047.5px;top:9px;font-size:17.3px;color:#0074e8">image<span style="color:#003eaa">#identity-icon</span></div>
</div>
<svg class="a" style="left:1244.5px;top:628.5px" width="13" height="19" viewBox="0 0 13 19"><path d="M2 1.5l8.5 8-8.5 8" fill="none" stroke="#6f6f73" stroke-width="2.6" stroke-linecap="round"/></svg>

  <!-- rules -->
<div class="a" style="left:1270px;top:166px;width:613px;height:74px;background:#f9f9fa"></div>
<div class="a" style="left:1270px;top:203px;width:613px;height:1px;background:#e0e0e2"></div>
<div class="a" style="left:1270px;top:240px;width:613px;height:1px;background:#e0e0e2"></div>
<svg class="a" style="left:1283px;top:178.5px" width="8" height="13" viewBox="0 0 8 13"><path d="M0 0l8 6.5L0 13z" fill="#8f8f93"/></svg>
<div class="a ws" style="left:1297.5px;top:176px;font-size:17.3px;color:#0c0c0d">Pseudo-Elemente</div>
<div class="a ws" style="left:1276.5px;top:213px;font-size:17px;color:#0c0c0d">Dieses Element</div>
<div class="rl" style="left:1276.5px;top:244.5px"><span class="s">Element </span></div>
<svg class="a" style="left:1349px;top:246px" width="18" height="18" viewBox="0 0 18 18"><rect x="3.5" y="3.5" width="11" height="11" rx="2" fill="none" stroke="#8f8f93" stroke-width="2.4"/><path d="M9 0v3.5M9 14.5V18M0 9h3.5M14.5 9H18" stroke="#8f8f93" stroke-width="1.8"/></svg>
<div class="rl" style="left:1378.5px;top:244.5px"><span class="p">{</span></div>
<div class="rl src" style="right:28.5px;top:244.5px">Inline</div>
<div class="rl" style="left:1276.5px;top:265.5px"><span class="p">}</span></div>
<div class="a" style="left:1270px;top:288px;width:613px;height:1px;background:#e0e0e2"></div>
<div class="rl" style="left:1276.5px;top:292.2px"><span class="s">#urlbar:not(.megabar) &gt; #urlbar-input-container &gt;</span></div>
<div class="rl src" style="right:28.5px;top:292.2px">browser.css:3585</div>
<div class="rl" style="left:1276.5px;top:311.0px"><span class="s">#identity-box[pageproxystate="invalid"] &gt;</span></div>
<div class="rl" style="left:1276.5px;top:329.8px"><span class="s">#identity-icon</span></div>
<svg class="a" style="left:1412px;top:331px" width="18" height="18" viewBox="0 0 18 18"><rect x="3.5" y="3.5" width="11" height="11" rx="2" fill="none" stroke="#8f8f93" stroke-width="2.4"/><path d="M9 0v3.5M9 14.5V18M0 9h3.5M14.5 9H18" stroke="#8f8f93" stroke-width="1.8"/></svg>
<div class="rl" style="left:1441.5px;top:329.8px"><span class="p">{</span></div>
<div class="rl" style="left:1306px;top:353.5px"><span class="pn">list-style-image</span><span class="p">: </span><span class="fn">url(</span><span class="pv">chrome://browser/skin/search-glass.svg</span><span class="fn">)</span><span class="p">;</span></div>
<div class="rl" style="left:1306px;top:375.2px"><span class="pn">fill-opacity</span><span class="p">: </span><span class="fn">.4</span><span class="p">;</span></div>
<div class="rl" style="left:1276.5px;top:396.0px"><span class="p">}</span></div>
<div class="a" style="left:1270px;top:417px;width:613px;height:1px;background:#e0e0e2"></div>
<div class="rl" style="left:1276.5px;top:421.5px"><span class="s">#identity-icon</span></div>
<svg class="a" style="left:1412px;top:423px" width="18" height="18" viewBox="0 0 18 18"><rect x="3.5" y="3.5" width="11" height="11" rx="2" fill="none" stroke="#8f8f93" stroke-width="2.4"/><path d="M9 0v3.5M9 14.5V18M0 9h3.5M14.5 9H18" stroke="#8f8f93" stroke-width="1.8"/></svg>
<div class="rl" style="left:1441.5px;top:421.5px"><span class="p">{</span></div>
<div class="rl src" style="right:28.5px;top:421.5px">browser.css:3576</div>
<div class="rl" style="left:1306px;top:444.2px"><span class="pn">margin-inline-start</span><span class="p">: </span><span class="fn">0</span><span class="p">;</span></div>
<div class="rl" style="left:1306px;top:465.5px"><span class="ov"><span class="og">list style image: url(</span><span class="pv">chrome://browser/skin/identity</span><span class="og">-</span></span></div>
<div class="rl" style="left:1358.5px;top:486.5px"><span class="ov"><span class="pv">icon.svg</span><span class="og">);</span></span></div>
<svg class="a" style="left:1464px;top:487.5px" width="15" height="17" viewBox="0 0 15 17"><path d="M1 1.5h13L9 7.5v8l-3-2v-6z" fill="none" stroke="#8f8f93" stroke-width="1.6" stroke-linejoin="round"/></svg>
<div class="rl" style="left:1276.5px;top:506.8px"><span class="p">}</span></div>
<div class="a" style="left:1270px;top:527px;width:613px;height:1px;background:#e0e0e2"></div>
<div class="rl" style="left:1276.5px;top:532.2px"><span class="u">.sharing-icon, </span><span class="s">#identity-icon</span><span class="u">, #permissions-</span></div>
<div class="rl src" style="right:28.5px;top:532.2px">browser.css:3559</div>
<div class="rl" style="left:1276.5px;top:551.5px"><span class="u">granted-icon, #tracking-protection-icon,</span></div>
<div class="rl" style="left:1276.5px;top:570.5px"><span class="u">.notification-anchor-icon, #blocked-permissions-container &gt;</span></div>
<div class="rl" style="left:1276.5px;top:589.8px"><span class="u">.blocked-permission-icon</span></div>
<svg class="a" style="left:1502px;top:591px" width="18" height="18" viewBox="0 0 18 18"><rect x="3.5" y="3.5" width="11" height="11" rx="2" fill="none" stroke="#8f8f93" stroke-width="2.4"/><path d="M9 0v3.5M9 14.5V18M0 9h3.5M14.5 9H18" stroke="#8f8f93" stroke-width="1.8"/></svg>
<div class="rl" style="left:1531px;top:589.8px"><span class="p">{</span></div>
<div class="rl" style="left:1306px;top:613.5px"><span class="pn">width</span><span class="p">: </span><span class="fn">16px</span><span class="p">;</span></div>
<div class="rl" style="left:1306px;top:634.5px"><span class="pn">height</span><span class="p">: </span><span class="fn">16px</span><span class="p">;</span></div>
<div class="a" style="left:1883px;top:166px;width:19px;height:490px;background:#f0f0f0"></div>
<svg class="a" style="left:1886.5px;top:173.5px" width="12" height="8" viewBox="0 0 12 8"><path d="M1 7l5-5 5 5" fill="none" stroke="#505050" stroke-width="1.8"/></svg>
<div class="a" style="left:1884px;top:188px;width:17px;height:29px;background:#cdcdcd"></div>
<svg class="a" style="left:1886.5px;top:642px" width="12" height="8" viewBox="0 0 12 8"><path d="M1 1l5 5 5-5" fill="none" stroke="#505050" stroke-width="1.8"/></svg>

  <!-- markup search row -->
  <div class="a" style="left:1px;top:92px;width:1267px;height:37px;background:#fff;border-bottom:1px solid #e0e0e2"></div>
  <svg class="a" style="left:12px;top:100px" width="19" height="19" viewBox="0 0 19 19"><circle cx="7.5" cy="7.5" r="5.8" fill="none" stroke="#8f8f93" stroke-width="2"/><path d="M11.5 11.5l6 6" stroke="#8f8f93" stroke-width="2.2" stroke-linecap="round"/></svg>
  <div class="a ws" style="left:35px;top:101px;font-size:16.8px;color:#939395">HTML durchsuchen</div>
  <div class="a" style="left:1179px;top:98px;width:1px;height:24px;background:#e0e0e2"></div>
  <svg class="a" style="left:1193px;top:102px" width="18" height="18" viewBox="0 0 18 18"><path d="M9 0v18M0 9h18" stroke="#6f6f73" stroke-width="1.8"/></svg>
  <svg class="a" style="left:1234px;top:101px" width="21" height="21" viewBox="0 0 21 21"><path d="M2 19l1-4 8-8 2.5 2.5-8 8z" fill="none" stroke="#8f8f93" stroke-width="1.8" stroke-linejoin="round"/><path d="M11 5.5l4.5 4.5M13 4l2.5-2.5a2 2 0 0 1 3 3L16 7" fill="none" stroke="#8f8f93" stroke-width="2.2"/></svg>
  <div class="a" style="left:1268px;top:92px;width:2px;height:564px;background:#e0e0e2"></div>

  <!-- sidebar tabs -->
  <div class="a" style="left:1270px;top:92px;width:634px;height:37px;background:#f9f9fa;border-bottom:1px solid #e0e0e2"></div>
  <svg class="a" style="left:1280px;top:102px" width="23" height="18" viewBox="0 0 23 18"><rect x="1" y="1" width="21" height="16" rx="1.5" fill="none" stroke="#38383d" stroke-width="2"/><path d="M13 1v16M17.5 1v16" stroke="#38383d" stroke-width="2"/><path d="M9.5 5v8l-5-4z" fill="#38383d"/></svg>
  <div class="a" style="left:1312px;top:92px;width:84px;height:2px;background:#0a84ff"></div>
  <div class="a ws" style="left:1328px;top:100px;font-size:17.5px;color:#0a5fd6">Regeln</div>
  <div class="a ws" style="left:1414px;top:100px;font-size:17.5px;color:#0c0c0d">Layout</div>
  <div class="a ws" style="left:1498px;top:100px;font-size:17.5px;color:#0c0c0d">Berechnet</div>
  <div class="a ws" style="left:1607px;top:100px;font-size:17.5px;color:#0c0c0d">Änderungen</div>
  <div class="a ws" style="left:1737px;top:100px;font-size:17.5px;color:#0c0c0d">Schriftarten</div>
  <div class="a ws" style="left:1860px;top:100px;width:22px;overflow:hidden;font-size:17.5px;color:#0c0c0d">An</div>
  <div class="a" style="left:1882px;top:92px;width:1px;height:37px;background:#e0e0e2"></div>
  <svg class="a" style="left:1886px;top:107px" width="12" height="7" viewBox="0 0 12 7"><path d="M0 0h12L6 6z" fill="#38383d"/></svg>
  <!-- filter row -->
  <div class="a" style="left:1270px;top:129px;width:634px;height:38px;background:#fff;border-bottom:1px solid #e0e0e2"></div>
  <svg class="a" style="left:1283px;top:139px" width="16" height="18" viewBox="0 0 16 18"><path d="M1 1.5h14L9.5 8v8.5l-3-2V8z" fill="none" stroke="#8f8f93" stroke-width="1.6" stroke-linejoin="round"/></svg>
  <div class="a ws" style="left:1304px;top:138px;font-size:17.5px;color:#939395">Stile filtern</div>
  <div class="a" style="left:1770px;top:131px;width:1px;height:34px;background:#e0e0e2"></div>
  <div class="a ws" style="left:1777px;top:138px;font-size:17.5px;color:#0c0c0d">:hov</div>
  <div class="a ws" style="left:1824px;top:138px;font-size:17.5px;color:#0c0c0d">.cls</div>
  <svg class="a" style="left:1868px;top:140px" width="18" height="18" viewBox="0 0 18 18"><path d="M9 0v18M0 9h18" stroke="#38383d" stroke-width="2"/></svg>
</div>
</div></body></html>
